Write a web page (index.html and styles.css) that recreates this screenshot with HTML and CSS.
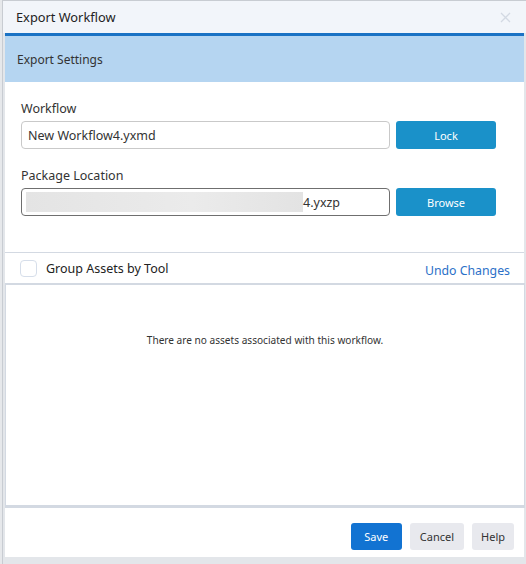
FILE: index.html
```html
<!DOCTYPE html>
<html lang="en">
<head>
    <meta charset="UTF-8">
    <meta name="viewport" content="width=device-width, initial-scale=1.0">
    <title>Export Workflow</title>
    <link rel="stylesheet" href="styles.css">
</head>
<body>
    <div class="dialog">
        <div class="titlebar">
            <span class="title">Export Workflow</span>
            <svg class="close" width="11" height="11" viewBox="0 0 11 11">
                <path d="M1 1L10 10M10 1L1 10" stroke="#d3d9e3" stroke-width="1.3" fill="none"/>
            </svg>
        </div>
        <div class="frame">
            <div class="content">
                <div class="sectionHead">Export Settings</div>
                <div class="settings">
                    <label class="fieldLabel">Workflow</label>
                    <div class="fieldRow">
                        <div class="input">New Workflow4.yxmd</div>
                        <button class="btnBlue">Lock</button>
                    </div>
                    <label class="fieldLabel">Package Location</label>
                    <div class="fieldRow">
                        <div class="input dark"><span class="blur"></span>4.yxzp</div>
                        <button class="btnBlue">Browse</button>
                    </div>
                </div>
                <div class="groupRow">
                    <span class="check"></span>
                    <span class="groupText">Group Assets by Tool</span>
                    <a class="undo">Undo Changes</a>
                </div>
                <div class="assets">
                    <p class="empty">There are no assets associated with this workflow.</p>
                </div>
                <div class="footer">
                    <button class="btn save">Save</button>
                    <button class="btn grey">Cancel</button>
                    <button class="btn grey">Help</button>
                </div>
            </div>
        </div>
    </div>
</body>
</html>
```

FILE: styles.css
```css
*{padding: 0; margin: 0; box-sizing: border-box;}
body {background: #e6e8eb; font-family: "Noto Sans", "Open Sans", sans-serif; color: #333; width: 526px; height: 564px; overflow: hidden;}
.dialog {margin-left: 2px; height: 564px; display: flex; flex-direction: column; background: #e3e6ea; border-left: 1px solid #c8ccd2;}
.titlebar {height: 33px; background: #f2f5fa; border-top: 1px solid #c8ccd2; display: flex; align-items: center; justify-content: space-between; padding: 0 15px 0 13px;}
.title {font-size: 12.8px; color: #222;}
.frame {flex: 1; padding: 0 2px 7px 2px; display: flex;}
.content {flex: 1; background: #fff; display: flex; flex-direction: column; border-top: 3px solid #1a72c4;}
.sectionHead {height: 46px; background: #b5d5f1; font-size: 12px; padding-left: 12px; display: flex; align-items: center;}
.settings {padding: 18px 28px 36px 16px; border-bottom: 1px solid #d3d9e2;}
.fieldLabel {display: block; font-size: 12.5px; line-height: 18px; margin-bottom: 3px;}
.fieldRow {display: flex; gap: 6px; margin-bottom: 18px;}
.fieldRow:last-child {margin-bottom: 0;}
.input {flex: 1; height: 28px; border: 1px solid #c9c9c9; border-radius: 4px; font-size: 12.5px; padding-left: 6px; display: flex; align-items: center; color: #333;}
.input.dark {border-color: #6f6f6f; padding-left: 4px;}
.blur {width: 277px; height: 20px; background: linear-gradient(90deg, #e4e4e4, #ebebeb 60%, #e3e3e3);}
.btnBlue {width: 100px; height: 28px; border: none; border-radius: 3px; background: #1a91c9; color: #fff; font-family: inherit; font-size: 11px;}
.groupRow {height: 30px; display: flex; align-items: center; padding: 0 14px 0 15px;}
.check {width: 17px; height: 17px; border: 1px solid #d6deea; border-radius: 4px; margin-right: 9px; margin-top: 1px;}
.groupText {font-size: 12.5px; flex: 1; color: #222;}
.undo {font-size: 12.3px; color: #2b70c8; margin-top: 4px;}
.assets {height: 225px; border: 1px solid #d3d9e2; border-top-width: 2px; border-bottom-width: 3px; margin-right: -1px;}
.empty {text-align: center; font-size: 10.1px; padding-top: 48px; color: #333;}
.footer {flex: 1; display: flex; justify-content: flex-end; align-items: flex-start; gap: 8px; padding: 15px 10px 0 0;}
.btn {height: 27px; border: none; border-radius: 3px; font-family: inherit; font-size: 11px; padding: 0 10px;}
.save {width: 51px; background: #1273d2; color: #fff;}
.grey {background: #e8e9ee; color: #333;}
.grey:last-child {padding: 0 9px;}
```
